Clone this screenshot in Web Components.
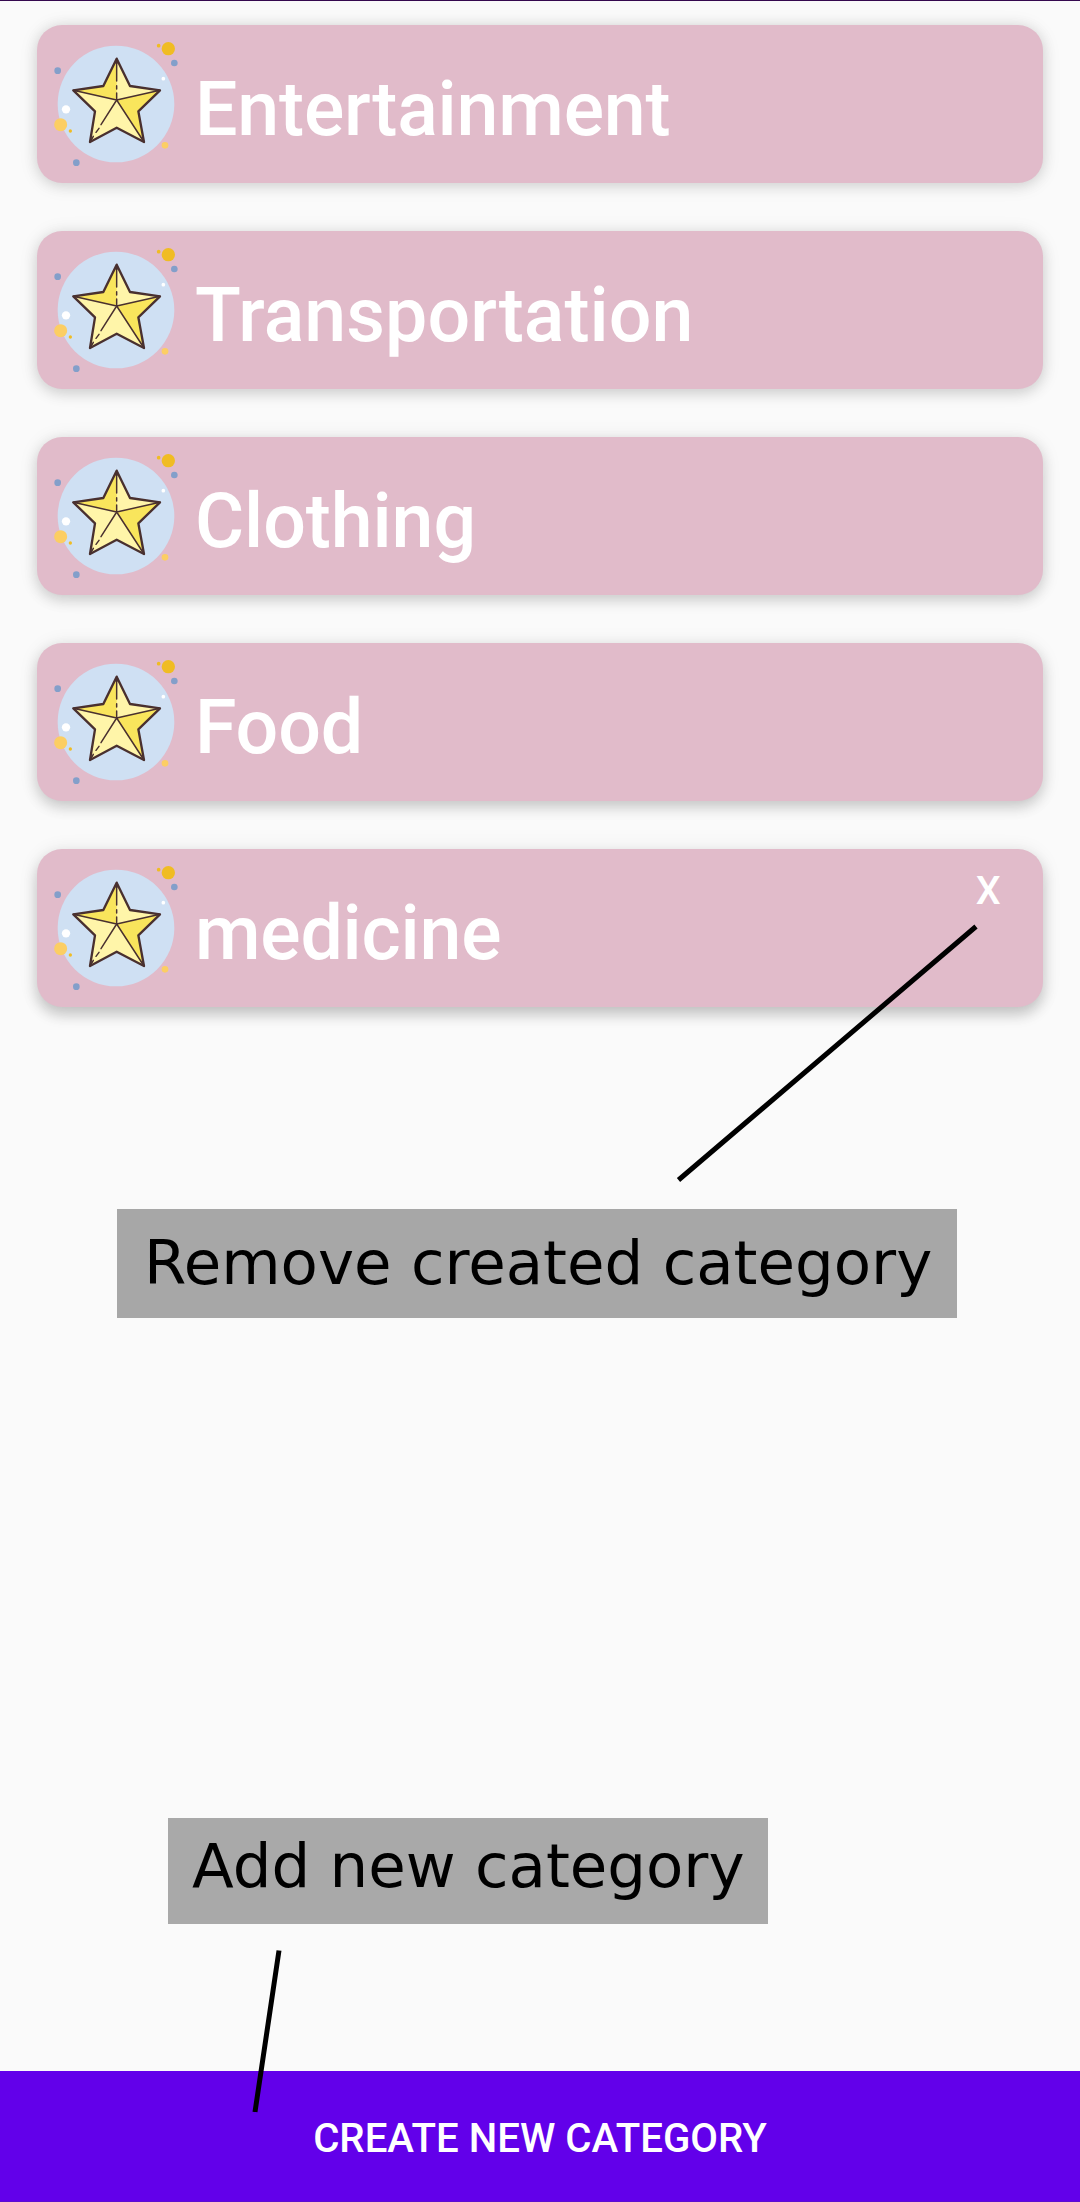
<!DOCTYPE html>
<html lang="en"><head><meta charset="utf-8"><title>Categories</title>
<style>html,body{margin:0;background:#fafafa}</style></head>
<body>
<category-screen>
  <category-card style="--drop:2px;--shade:.12;--track:-.2px">Entertainment</category-card>
  <category-card style="--drop:4px;--shade:.13;--track:.05px">Transportation</category-card>
  <category-card style="--drop:5px;--shade:.14">Clothing</category-card>
  <category-card style="--drop:6px;--shade:.16">Food</category-card>
  <category-card style="--drop:8px;--shade:.18;--track:-.25px" removable>medicine</category-card>
  <callout-note slot="notes" class="remove">Remove created category</callout-note>
  <callout-note slot="notes" class="add">Add new category</callout-note>
  <action-bar slot="action">CREATE NEW CATEGORY</action-bar>
</category-screen>
<script>
const define = (name, html) => customElements.define(name, class extends HTMLElement {
  constructor() { super(); this.attachShadow({mode: 'open'}).innerHTML = html; }
});

define('star-icon', `<style>:host{display:block;flex:none;width:158px;height:158px}svg{display:block}</style>
<svg width="158" height="158" viewBox="21 75 474 474">
  <circle cx="258" cy="312" r="175" fill="#cfe0f3"/>
  <g fill="#839fca"><circle cx="83" cy="212" r="10"/><circle cx="433" cy="189" r="10"/><circle cx="139" cy="488" r="10"/></g>
  <g fill="#f0bc23"><circle cx="415" cy="146" r="20"/><circle cx="386" cy="137" r="5.5"/><circle cx="121" cy="393" r="5"/></g>
  <g fill="#fcce63"><circle cx="92" cy="374" r="19.5"/><circle cx="405" cy="436" r="10"/></g>
  <g fill="#fff"><circle cx="108" cy="328" r="12.5"/><circle cx="400" cy="236" r="5.5"/></g>
  <path fill="#fff5a9" d="M260 176 300 258 390 271 325 334 342 426 260 383 180 426 195 334 130 271 220 258Z"/>
  <path fill="#f9e55c" d="M260 176 220 258 130 271 260 300ZM390 271 325 334 342 426 260 300Z"/>
  <g fill="none" stroke="#49302f" stroke-linejoin="round" stroke-linecap="round">
    <path stroke-width="7" d="M260 176 300 258 390 271 325 334 342 426 260 383 180 426 195 334 130 271 220 258Z"/>
    <path stroke-width="4.4" d="M130 271 260 300 390 271M260 300 342 426M260 300 213 374M207 385 198 397M190 409 180 426M260 300V279M260 267V257M260 243V176"/>
    <path stroke-width="3" d="M258 190 260 178 263 190M134 271 145 274M386 271 375 274M180 424 186 416M341 424 333 413"/>
  </g>
</svg>`);

define('category-card', `<style>
:host{display:flex;position:relative;width:1006px;height:158px;border-radius:25px;background:#e1bbca;color:#fff;box-shadow:0 var(--drop) 14px rgba(0,0,0,var(--shade)),0 2px 20px rgba(0,0,0,.09);font:500 75.3px/88px Roboto,sans-serif;letter-spacing:var(--track,-.1px)}
.name{margin-top:40px;white-space:nowrap}
.x{display:none;position:absolute;right:42.5px;top:19px;font:500 39.5px/45px Roboto,sans-serif}
:host([removable]) .x{display:block}
</style><star-icon></star-icon><span class="name"><slot></slot></span><span class="x">X</span>`);

define('callout-note', `<style>
:host{display:flex;box-sizing:border-box;color:#000;background:#a7a7a7;font:61px/72px "DejaVu Sans",sans-serif;white-space:nowrap}
:host(.remove){width:840px;height:109px;padding:18px 0 0 27px}
:host(.add){width:600px;height:106px;padding:12px 0 0 24px;margin:500px 0 0 51px;background:#a9a9a9}
</style><span><slot></slot></span>`);

define('action-bar', `<style>
:host{display:flex;justify-content:center;align-items:center;height:131px;box-sizing:border-box;padding-top:6px;background:#6200ea;color:#fff;font:500 40.2px/46px Roboto,sans-serif;border-bottom:1px solid #5b0fd0}
</style><span><slot></slot></span>`);

define('category-screen', `<style>
:host{display:flex;flex-direction:column;position:relative;box-sizing:border-box;width:1080px;height:2202px;overflow:hidden;background:#fafafa;border-top:1px solid #35094f}
.list{display:flex;flex-direction:column;gap:48px;height:1030px;box-sizing:border-box;padding:24px 37px 0;overflow:hidden}
.notes{display:flex;flex-direction:column;margin-left:117px;padding-top:178px;flex:1}
.lines{position:absolute;left:0;top:-1px;pointer-events:none}
</style>
<div class="list"><slot></slot></div>
<div class="notes"><slot name="notes"></slot></div>
<slot name="action"></slot>
<svg class="lines" width="1080" height="2202" stroke="#000" stroke-width="5"><path d="M976 926.5 678.5 1180M279 1950.5 255 2112"/></svg>`);
</script>
</body></html>
